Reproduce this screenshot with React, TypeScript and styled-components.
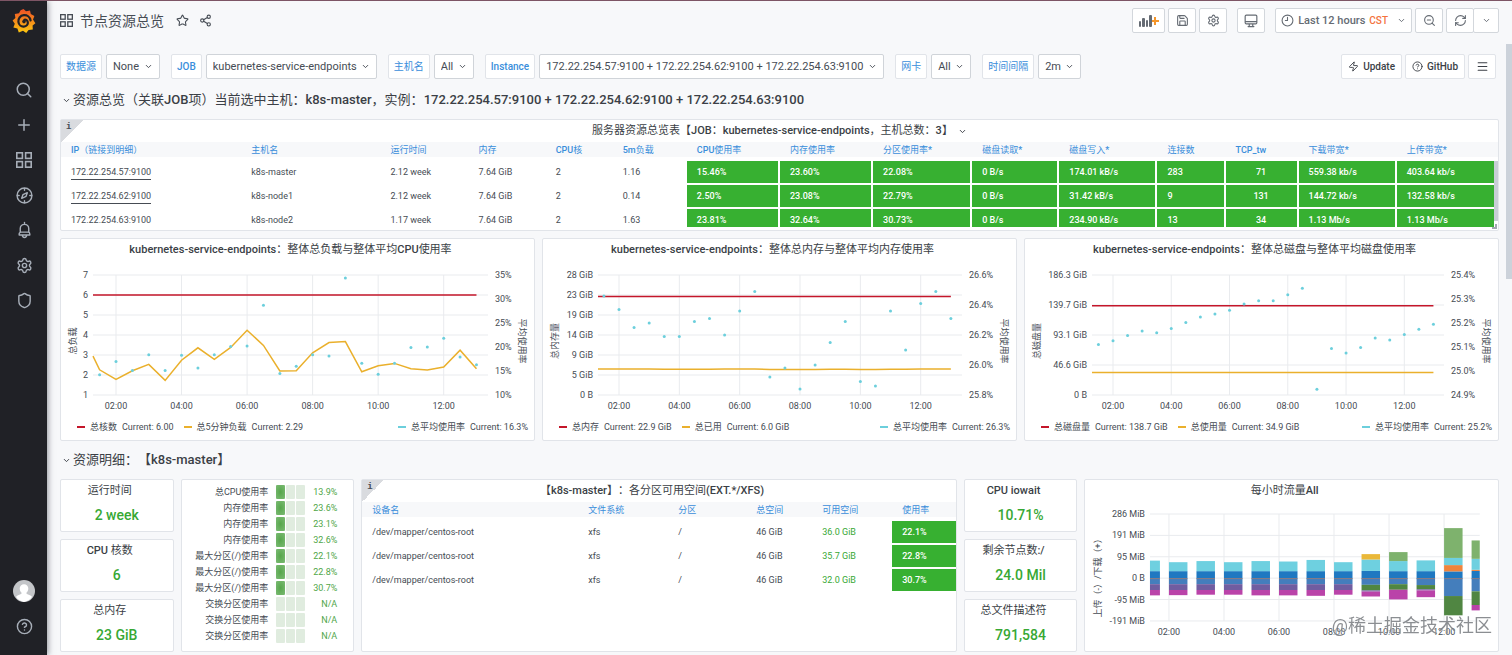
import React, { useId } from "react";
import styled, { createGlobalStyle, css } from "styled-components";
import {
  Search, Plus, Settings, Shield, Star, Share2, Save,
  ZoomOut, RefreshCw, ChevronDown, Zap, Menu, CircleHelp, Clock9,
} from "lucide-react";

const c = {
  text: "#464c54",
  heading: "#3b3f46",
  blue: "#3a8edb",
  page: "#f7f8fa",
  border: "#e1e4e9",
  green: "#37b031",
  statGreen: "#37a834",
  gauge: "#4fa648",
  rail: "#202126",
  railIcon: "#a7aeb8",
};

const Global = createGlobalStyle`
  * { box-sizing: border-box; }
  body {
    margin: 0;
    background: ${c.page};
    color: ${c.text};
    font: 9px/14px Roboto, "Noto Sans CJK SC", sans-serif;
    text-spacing-trim: space-all;
  }
  button, select { font: inherit; color: inherit; }
  h1, h2, h3, p { margin: 0; font-weight: 400; }
  b { font-weight: 500; }
`;

const Shell = styled.div`
  position: relative;
  display: flex;
  height: 100vh;
  overflow: hidden;
  border-top: 1px solid #7d5565;
`;
const PageScroll = styled.div`
  position: absolute;
  top: 43px;
  right: 0;
  width: 6px;
  height: 36%;
  background: #ccd2da;
`;

/* Side rail */
const Rail = styled.nav`
  flex: 0 0 47px;
  display: flex;
  flex-direction: column;
  align-items: center;
  padding: 7px 0 14px 1px;
  background: ${c.rail};
  box-shadow: 1px 0 6px rgba(60, 66, 76, 0.55);
  z-index: 1;
`;
const Logo = styled.a`
  display: flex;
  margin-bottom: 41px;
`;
const RailButton = styled.button`
  display: flex;
  align-items: center;
  justify-content: center;
  width: 30px;
  height: 30px;
  margin-bottom: 5px;
  padding: 0;
  border: 0;
  background: none;
  color: ${c.railIcon};
  &:last-child { margin-bottom: 0; }
`;
const RailSpacer = styled.div`
  flex: 1;
`;

/* Page frame */
const Page = styled.main`
  flex: 1;
  min-width: 0;
  padding: 7px 13px 0;
`;
const Bar = styled.header`
  display: flex;
  align-items: center;
  gap: 3px;
  height: 25px;
`;
const Crumb = styled.h1`
  display: flex;
  align-items: center;
  gap: 7px;
  margin-right: 5px;
  font-size: 14px;
  line-height: 20px;
`;
const IconButton = styled.button`
  display: flex;
  width: 20px;
  justify-content: center;
  padding: 0;
  border: 0;
  background: none;
`;
const Push = styled.div`
  flex: 1;
`;
const ToolButton = styled.button<{ $wide?: boolean; $apart?: boolean }>`
  display: flex;
  align-items: center;
  justify-content: center;
  gap: 4px;
  height: 25px;
  min-width: ${(p) => (p.$wide ? 33 : 28)}px;
  margin-left: ${(p) => (p.$apart ? 7 : 0)}px;
  padding: 0 5px;
  border: 1px solid #d3d7dc;
  border-radius: 2px;
  background: #fff;
  font-size: 11px;
  font-weight: 500;
  color: #656b73;
  white-space: nowrap;
`;
const Zone = styled.span`
  margin-right: 5px;
  font-size: 10px;
  color: #f4733d;
`;
const Joined = styled.div`
  display: flex;
  & > button + button { margin-left: -1px; min-width: 26px; }
`;

/* Variables */
const Filters = styled.div`
  display: flex;
  align-items: center;
  gap: 11px;
  height: 25px;
  margin: 21px 3px 0 0;
`;
const Field = styled.div`
  display: flex;
  gap: 4px;
`;
const FieldLabel = styled.label`
  height: 25px;
  padding: 0 5px;
  border: 1px solid ${c.border};
  border-radius: 2px;
  background: #fff;
  color: ${c.blue};
  font-size: 10px;
  line-height: 23px;
`;
const SelectBox = styled.div`
  display: grid;
  align-items: center;
  & > * { grid-area: 1 / 1; }
  & > svg { justify-self: end; margin-right: 7px; pointer-events: none; }
`;
const Select = styled.select`
  appearance: none;
  height: 25px;
  padding: 0 19px 0 6px;
  border: 1px solid #d0d4d9;
  border-radius: 2px;
  background: #fff;
  font-size: 11px;
`;
const LinkButton = styled(ToolButton)`
  padding: 0 6px;
  border-color: ${c.border};
  font-size: 10px;
  color: ${c.heading};
`;
const Links = styled.div`
  display: flex;
  gap: 3px;
`;

/* Dashboard rows and panels */
const RowTitle = styled.h2<{ $first?: boolean }>`
  display: flex;
  align-items: center;
  gap: 2px;
  height: ${(p) => (p.$first ? 40 : 38)}px;
  padding-top: ${(p) => (p.$first ? 2 : 0)}px;
  padding-left: 2px;
  font-size: 13px;
  line-height: 18px;
  color: ${c.heading};
  white-space: pre;
`;
const Grid = styled.div`
  display: grid;
  grid-template-columns: repeat(24, minmax(0, 1fr));
  gap: 7px;
`;
const Stack = styled.div<{ $span: number }>`
  grid-column: span ${(p) => p.$span};
  display: grid;
  gap: 7px;
`;
const PanelBox = styled.section<{ $span?: number }>`
  grid-column: span ${(p) => p.$span ?? 1};
  position: relative;
  min-width: 0;
  border: 1px solid ${c.border};
  border-radius: 2px;
  background: #fff;
`;
const PanelTitle = styled.h3<{ $menu?: boolean }>`
  display: flex;
  align-items: center;
  justify-content: center;
  gap: 5px;
  height: 21px;
  padding: 1px ${(p) => (p.$menu ? 0 : 14)}px 0 0;
  font-size: 11px;
  line-height: 16px;
  color: ${c.heading};
  white-space: pre;
`;
const Corner = styled.span`
  position: absolute;
  top: 0;
  left: 0;
  width: 22px;
  height: 22px;
  padding-left: 5px;
  background: linear-gradient(135deg, #d9dbdf 50%, transparent 50%);
  font: bold 9px/14px "Liberation Mono", monospace;
`;

/* Tables */
const TableWrap = styled.div<{ $clip?: boolean }>`
  position: relative;
  margin-top: 1px;
  ${(p) =>
    p.$clip &&
    css`
      height: 85px;
      margin-bottom: 3px;
      padding-right: 4px;
      overflow: hidden;
      background: linear-gradient(${c.page} 15px, transparent 15px);
      &::after {
        content: "";
        position: absolute;
        top: 19px;
        right: 0;
        width: 4px;
        height: 60px;
        background: #c8ced6;
      }
    `}
`;
const Resize = styled.span`
  position: absolute;
  right: 1px;
  bottom: 1px;
  width: 5px;
  height: 5px;
  border: solid #a2a8b0;
  border-width: 0 2px 2px 0;
`;
const Table = styled.table`
  width: 100%;
  table-layout: fixed;
  border-collapse: separate;
  border-spacing: 0;
`;
const Col = styled.col<{ $w: number }>`
  width: ${(p) => p.$w}px;
`;
const Th = styled.th`
  height: 19px;
  padding: 2px 0 0 10px;
  border-bottom: 4px solid #fff;
  background: ${c.page};
  color: ${c.blue};
  font-weight: 400;
  line-height: 13px;
  text-align: left;
  white-space: nowrap;
`;
const Td = styled.td<{ $fill?: boolean; $center?: boolean; $green?: boolean }>`
  height: 24px;
  padding: 0 0 0 ${(p) => (p.$center ? 0 : 10)}px;
  border: solid #fff;
  border-width: 0 2px 2px 0;
  white-space: nowrap;
  text-align: ${(p) => (p.$center ? "center" : "left")};
  color: ${(p) => (p.$fill ? "#fff" : p.$green ? c.statGreen : c.text)};
  font-weight: ${(p) => (p.$fill ? 500 : 400)};
  background: ${(p) => (p.$fill ? c.green : "#fff")};
  &:last-child { border-right-width: 0; }
`;
const HostLink = styled.a`
  color: inherit;
  text-decoration: none;
  border-bottom: 1px solid ${c.text};
  padding-bottom: 2px;
`;

/* Stats, gauges, charts */
const StatValue = styled.p`
  height: 30px;
  padding: 4px 0 6px;
  font-size: 14px;
  font-weight: 500;
  line-height: 20px;
  text-align: center;
  color: ${c.statGreen};
`;
const Gauges = styled.div`
  display: grid;
  grid-template-columns: 1fr auto 24px;
  grid-auto-rows: 14px;
  gap: 2px 8px;
  padding: 5px 16px 5px 4px;
  text-align: right;
  white-space: nowrap;
`;
const Cells = styled.span`
  display: grid;
  grid-template-columns: repeat(3, 9px);
  gap: 1px;
`;
const Cell = styled.i<{ $on: boolean }>`
  border-radius: 1px;
  background: ${(p) => (p.$on ? "radial-gradient(#56a64b, #7cbb74)" : "#e0ecdf")};
`;
const GaugeValue = styled.span`
  color: ${c.gauge};
`;
const Plot = styled.svg`
  display: block;
  width: 100%;
  height: auto;
  fill: ${c.text};
  font-size: 9px;
`;
const Legend = styled.div`
  display: flex;
  align-items: flex-start;
  gap: 10px;
  height: 25px;
  padding: 5px 6px 0 16px;
  white-space: nowrap;
  & > :last-child { margin-left: auto; }
`;
const Key = styled.span<{ $color: string }>`
  display: flex;
  align-items: center;
  gap: 5px;
  &::before {
    content: "";
    width: 8px;
    height: 2px;
    background: ${(p) => p.$color};
  }
`;
const Watermark = styled.div`
  position: fixed;
  right: 20px;
  bottom: 16px;
  font-size: 18px;
  line-height: 26px;
  color: rgba(90, 94, 100, 0.7);
  text-shadow: 0 0 2px #fff;
`;

/* Icons */
const AppsIcon = ({ size }: { size: number }) => (
  <svg width={size} height={size} viewBox="0 0 20 20" fill="none" stroke="currentColor" strokeWidth="2">
    <rect x="1" y="1" width="7" height="7" /><rect x="12" y="1" width="7" height="7" />
    <rect x="1" y="12" width="7" height="7" /><rect x="12" y="12" width="7" height="7" />
  </svg>
);
const CompassIcon = () => (
  <svg width="17" height="17" viewBox="0 0 24 24" fill="none" stroke="currentColor" strokeWidth="2" strokeLinecap="round" strokeLinejoin="round">
    <circle cx="12" cy="12" r="10.500" />
    <path d="M12 2v2.500M12 19.500V22M2 12h2.500M19.500 12H22M16 8l-1.800 5.200L8 16l1.800-5.200z" />
  </svg>
);
const BellIcon = () => (
  <svg width="17" height="18" viewBox="0 0 24 24" fill="none" stroke="currentColor" strokeWidth="2" strokeLinecap="round" strokeLinejoin="round">
    <path d="M12 1.500V4M6 15v-5a6 6 0 0 1 12 0v5M4.500 19v-1.500A2.500 2.500 0 0 1 7 15h10a2.500 2.500 0 0 1 2.500 2.500V19zM9 19.500a3 3 0 0 0 6 0" />
  </svg>
);
const ScreenIcon = () => (
  <svg width="14" height="14" viewBox="0 0 24 24" fill="none" stroke="currentColor" strokeWidth="2" strokeLinecap="round" strokeLinejoin="round">
    <path d="M4 2h16a2 2 0 0 1 2 2v11a2 2 0 0 1-2 2H4a2 2 0 0 1-2-2V4a2 2 0 0 1 2-2zM2 13h20M9 17v4M15 17v4M7 21.500h10" />
  </svg>
);
const AddPanelIcon = () => (
  <svg width="20" height="14" viewBox="0 0 20 14" fill="#656b73">
    <rect x="0" y="7" width="2" height="6" rx="1" /><rect x="3" y="4" width="3" height="9" rx="1" />
    <rect x="7" y="6" width="2" height="7" rx="1" /><rect x="10" y="1" width="3" height="12" rx="1" />
    <path d="M15 3h2v3h3v2h-3v3h-2V8h-2V6h2z" fill="#f5962a" />
  </svg>
);
const GrafanaIcon = () => {
  const id = useId();
  return (
    <svg width="24" height="26" viewBox="0 0 24 26">
      <defs>
        <linearGradient id={id} x1="0" y1="0" x2="0" y2="1">
          <stop offset="0" stopColor="#ee4f27" /><stop offset="1" stopColor="#fcc80f" />
        </linearGradient>
      </defs>
      <path fill={`url(#${id})`} d="M11.5 1 14 3.3 18 2.4 18.8 6 22.4 8 21 11.6 23.4 15.2 20.6 17.6 20.8 21.6 16.6 22 14.2 25 11 22.8 6.8 24.6 5.4 20.6 1.4 19.6 2.8 15.8.6 12.6 3.4 10 2.8 6 7 5.2 8.6 2.2z" />
      <path fill="none" stroke={c.rail} strokeWidth="2.2" strokeLinecap="round" d="M18.6 12.4c-.8-3.6-3.6-5.6-6.8-5.2-3.6.4-5.8 3.4-5.4 6.6.4 3 2.8 5 5.4 4.8 2.8-.2 4.4-2.2 4-4.4-.3-1.8-1.8-2.9-3.4-2.5" />
      <circle cx="12" cy="13.6" r="1.8" fill={c.rail} />
    </svg>
  );
};
const Avatar = () => (
  <svg width="22" height="22" viewBox="0 0 22 22">
    <circle cx="11" cy="11" r="11" fill="#c3c5c8" />
    <path fill="#fff" d="M11 4.2a4.3 4.3 0 0 1 4.3 4.4c0 2-.9 3.300-1.900 4.200 0 1 .5 1.400 2.300 1.900 1.800.5 2.800 1.200 3.200 2.400A11 11 0 0 1 11 22a11 11 0 0 1-7.900-4.900c.4-1.200 1.400-1.900 3.200-2.400 1.800-.5 2.300-.9 2.300-1.900-1-.9-1.900-2.200-1.900-4.200A4.300 4.300 0 0 1 11 4.200z" />
  </svg>
);
const Caret = () => <ChevronDown size={9} strokeWidth={2.5} />;

/* Latin runs are set in medium weight, Chinese runs stay regular. */
const Mixed = ({ children }: { children: string }) => (
  <span>
    {children.split(/([\x21-\x7e](?:[\x20-\x7e]*[\x21-\x7e])?)/).map((part, i) => (i % 2 ? <b key={i}>{part}</b> : part))}
  </span>
);

/* Data */
const fields = [
  ["数据源", "None"],
  ["JOB", "kubernetes-service-endpoints"],
  ["主机名", "All"],
  ["Instance", "172.22.254.57:9100 + 172.22.254.62:9100 + 172.22.254.63:9100"],
  ["网卡", "All"],
  ["时间间隔", "2m"],
];

const hostCols: [string, number][] = [
  ["IP（链接到明细）", 180], ["主机名", 139], ["运行时间", 88], ["内存", 77], ["CPU核", 67],
  ["5m负载", 74], ["CPU使用率", 93], ["内存使用率", 93], ["分区使用率*", 99], ["磁盘读取*", 87],
  ["磁盘写入*", 98], ["连接数", 68], ["TCP_tw", 73], ["下载带宽*", 98], ["上传带宽*", 97],
];
const hosts = [
  ["172.22.254.57:9100", "k8s-master", "2.12 week", "7.64 GiB", "2", "1.16", "15.46%", "23.60%", "22.08%", "0 B/s", "174.01 kB/s", "283", "71", "559.38 kb/s", "403.64 kb/s"],
  ["172.22.254.62:9100", "k8s-node1", "2.12 week", "7.64 GiB", "2", "0.14", "2.50%", "23.08%", "22.79%", "0 B/s", "31.42 kB/s", "9", "131", "144.72 kb/s", "132.58 kb/s"],
  ["172.22.254.63:9100", "k8s-node2", "1.17 week", "7.64 GiB", "2", "1.63", "23.81%", "32.64%", "30.73%", "0 B/s", "234.90 kB/s", "13", "34", "1.13 Mb/s", "1.13 Mb/s"],
];

const diskCols: [string, number][] = [
  ["设备名", 216], ["文件系统", 90], ["分区", 78], ["总空间", 66], ["可用空间", 80], ["使用率", 64],
];
const disks = [
  ["/dev/mapper/centos-root", "xfs", "/", "46 GiB", "36.0 GiB", "22.1%"],
  ["/dev/mapper/centos-root", "xfs", "/", "46 GiB", "35.7 GiB", "22.8%"],
  ["/dev/mapper/centos-root", "xfs", "/", "46 GiB", "32.0 GiB", "30.7%"],
];

const gauges: [string, string][] = [
  ["总CPU使用率", "13.9%"], ["内存使用率", "23.6%"], ["内存使用率", "23.1%"], ["内存使用率", "32.6%"],
  ["最大分区(/)使用率", "22.1%"], ["最大分区(/)使用率", "22.8%"], ["最大分区(/)使用率", "30.7%"],
  ["交换分区使用率", "N/A"], ["交换分区使用率", "N/A"], ["交换分区使用率", "N/A"],
];

type Trend = {
  title: string;
  leftTitle: string;
  left: string[];
  right: string[];
  range: [number, number];
  dotRange: [number, number];
  geo: { from: number; two: number; hour: number; label: number };
  total: number;
  used: number[];
  dots: number[];
  legend: [string, string, string][];
};
const RED = "#c4162a";
const YELLOW = "#eab02c";
const CYAN = "#6ccfdc";

const trends: Trend[] = [
  {
    title: "整体总负载与整体平均CPU使用率",
    leftTitle: "总负载",
    left: ["7", "6", "5", "4", "3", "2", "1"],
    right: ["35%", "30%", "25%", "20%", "15%", "10%"],
    range: [1, 7],
    dotRange: [10, 35],
    geo: { from: 32, two: 55, hour: 32.77, label: 434 },
    total: 6,
    used: [2.94, 2.26, 1.78, 2.21, 2.53, 1.73, 2.74, 3.36, 2.78, 3.38, 4.24, 3.48, 2.2, 2.21, 3.11, 3.62, 3.67, 2.16, 2.46, 2.58, 2.31, 2.25, 2.4, 3.24, 2.31],
    dots: [14.2, 17, 15.1, 18.4, 15.1, 18.3, 15.6, 18.4, 20.1, 20.2, 28.7, 14.5, 16, 18.4, 18.1, 34.4, 16.6, 14.3, 16.6, 19.9, 20, 21.8, 17.9, 16.3],
    legend: [["总核数", "6.00", RED], ["总5分钟负载", "2.29", YELLOW], ["总平均使用率", "16.3%", CYAN]],
  },
  {
    title: "整体总内存与整体平均内存使用率",
    leftTitle: "总内存量",
    left: ["28 GiB", "23 GiB", "19 GiB", "14 GiB", "9 GiB", "5 GiB", "0 B"],
    right: ["26.6%", "26.4%", "26.2%", "26.0%", "25.8%"],
    range: [0, 27.9],
    dotRange: [25.8, 26.6],
    geo: { from: 55, two: 76, hour: 30.17, label: 426 },
    total: 22.9,
    used: [6.05, 6.05, 6.05, 6.05, 6.05, 6, 6, 6, 6, 6.05, 6.05, 6.05, 5.95, 5.95, 5.9, 5.95, 6, 6, 5.95, 5.95, 6, 6, 6.05, 6.05, 6.05],
    dots: [26.46, 26.37, 26.25, 26.28, 26.19, 26.19, 26.29, 26.31, 26.2, 26.36, 26.49, 25.92, 25.98, 25.84, 26, 26.15, 26.29, 25.89, 25.86, 26.36, 26.1, 26.41, 26.49, 26.31],
    legend: [["总内存", "22.9 GiB", RED], ["总已用", "6.0 GiB", YELLOW], ["总平均使用率", "26.3%", CYAN]],
  },
  {
    title: "整体总磁盘与整体平均磁盘使用率",
    leftTitle: "总磁盘量",
    left: ["186.3 GiB", "139.7 GiB", "93.1 GiB", "46.6 GiB", "0 B"],
    right: ["25.4%", "25.3%", "25.2%", "25.1%", "25.0%", "24.9%"],
    range: [0, 186.3],
    dotRange: [24.9, 25.4],
    geo: { from: 67, two: 88, hour: 29.13, label: 426 },
    total: 138.7,
    used: Array(25).fill(34.9),
    dots: [25.11, 25.126, 25.148, 25.167, 25.159, 25.177, 25.202, 25.225, 25.237, 25.253, 25.279, 25.293, 25.293, 25.318, 25.345, 24.924, 25.094, 25.075, 25.098, 25.138, 25.129, 25.152, 25.174, 25.195],
    legend: [["总磁盘量", "138.7 GiB", RED], ["总使用量", "34.9 GiB", YELLOW], ["总平均使用率", "25.2%", CYAN]],
  },
];

const HOURS = [2, 4, 6, 8, 10, 12];
const clock = (h: number) => `${String(h).padStart(2, "0")}:00`;

function TrendPanel({ t }: { t: Trend }) {
  const top = 15;
  const bottom = 135;
  const { from, two, hour, label } = t.geo;
  const x = (h: number) => two + (h - 2) * hour;
  const y = (v: number, [lo, hi]: [number, number]) => bottom - ((v - lo) / (hi - lo)) * (bottom - top);
  const end = x(13);
  const gridEnd = label - 7;
  const tick = (i: number, n: number) => top + (i * (bottom - top)) / (n - 1);
  const line = t.used.map((v, i) => `${i ? x(1 + i / 2) : from},${y(v, t.range)}`).join(" ");
  return (
    <PanelBox $span={8}>
      <PanelTitle><Mixed>{`kubernetes-service-endpoints：${t.title}`}</Mixed></PanelTitle>
      <Plot viewBox="0 0 473 155" role="img" aria-label={t.title}>
        <g stroke="#e9ebee">
          {t.left.map((l, i) => <line key={l} x1={from} x2={gridEnd} y1={tick(i, t.left.length)} y2={tick(i, t.left.length)} />)}
          {HOURS.map((h) => <line key={h} x1={x(h)} x2={x(h)} y1={top} y2={bottom} />)}
        </g>
        <g textAnchor="end">
          {t.left.map((l, i) => <text key={l} x={from - 5} y={tick(i, t.left.length) + 3}>{l}</text>)}
        </g>
        {t.right.map((l, i) => <text key={l} x={label} y={tick(i, t.right.length) + 3}>{l}</text>)}
        <g textAnchor="middle">
          {HOURS.map((h) => <text key={h} x={x(h)} y="149">{clock(h)}</text>)}
          <text transform="translate(15 81) rotate(-90)">{t.leftTitle}</text>
          <text transform="translate(458 81) rotate(90)">平均使用率</text>
        </g>
        <line x1={from} x2={end} y1={y(t.total, t.range)} y2={y(t.total, t.range)} stroke={RED} strokeWidth="1.5" />
        <polyline points={line} fill="none" stroke={YELLOW} strokeWidth="1.5" />
        {t.dots.map((v, i) => <circle key={i} cx={x(1.5 + i / 2)} cy={y(v, t.dotRange)} r="1.5" fill={CYAN} />)}
      </Plot>
      <Legend>
        {t.legend.map(([name, value, color]) => (
          <Key key={name} $color={color}>{name} <span>Current: {value}</span></Key>
        ))}
      </Legend>
    </PanelBox>
  );
}

const s = {
  blue: "#1f78c1", cyan: "#6ed0e0", steel: "#447ebc", purple: "#705da0", magenta: "#ba43a9",
  forest: "#508642", green: "#7eb26d", yellow: "#eab839", orange: "#ef843c",
};
type Seg = [string, number];
const usual = (up: number, down: number): [Seg[], Seg[]] => [
  [[s.blue, 31], [s.cyan, up]],
  [[s.steel, 27], [s.purple, 53], [s.magenta, down]],
];
const traffic: [Seg[], Seg[]][] = [
  usual(78, 77), usual(71, 76), usual(76, 74), usual(71, 74), usual(76, 77), usual(74, 77), usual(81, 79), usual(71, 74),
  [[[s.blue, 32], [s.cyan, 83], [s.yellow, 107]], [[s.steel, 30], [s.forest, 55], [s.purple, 60], [s.magenta, 82]]],
  [[[s.blue, 31], [s.cyan, 76], [s.green, 116]], [[s.steel, 27], [s.forest, 52], [s.magenta, 95]]],
  [[[s.blue, 31], [s.cyan, 79]], [[s.steel, 31], [s.forest, 50], [s.purple, 55], [s.magenta, 85]]],
  [[[s.blue, 30], [s.orange, 58], [s.cyan, 90], [s.green, 223]], [[s.steel, 80], [s.forest, 166]]],
  [[[s.blue, 32], [s.orange, 37], [s.cyan, 86], [s.green, 168]], [[s.steel, 59], [s.forest, 120], [s.magenta, 144]]],
];

function TrafficPanel() {
  const labels = ["286 MiB", "191 MiB", "95 MiB", "0 B", "-95 MiB", "-191 MiB"];
  const from = 65;
  const to = 395;
  const x = (h: number) => 84 + (h - 2) * 27.53;
  const y = (v: number) => 14 + ((286 - v) / 477) * 107;
  const tick = (i: number) => 14 + (i * 107) / 5;
  return (
    <PanelBox $span={7}>
      <PanelTitle><Mixed>每小时流量All</Mixed></PanelTitle>
      <Plot viewBox="0 1 413 150" role="img" aria-label="每小时流量All">
        <g stroke="#e9ebee">
          {labels.map((l, i) => <line key={l} x1={from} x2={to} y1={tick(i)} y2={tick(i)} />)}
          {HOURS.map((h) => <line key={h} x1={x(h)} x2={x(h)} y1="14" y2="121" />)}
        </g>
        <g textAnchor="end">
          {labels.map((l, i) => <text key={l} x="60" y={tick(i) + 3}>{l}</text>)}
        </g>
        <g textAnchor="middle">
          {HOURS.map((h) => <text key={h} x={x(h)} y="135">{clock(h)}</text>)}
          <text transform="translate(16 76) rotate(-90)">上传（-）/下载（+）</text>
        </g>
        {traffic.map((sides, i) => {
          const a = Math.max(from, x(i + 1));
          const b = Math.min(to, x(i + 1) + 18.5);
          return sides.map((segs, side) =>
            segs.map(([color, v], k) => {
              const sign = side ? -1 : 1;
              const y1 = y(sign * (k ? segs[k - 1][1] : 0));
              const y2 = y(sign * v);
              return <rect key={`${i}-${side}-${k}`} x={a} width={b - a} y={Math.min(y1, y2)} height={Math.abs(y2 - y1)} fill={color} />;
            }),
          ).concat([[<rect key={`${i}-z`} x={a} width={b - a} y={y(0)} height="1" fill="#8a7a80" />]]);
        })}
      </Plot>
    </PanelBox>
  );
}

const Stat = ({ title, value }: { title: string; value: string }) => (
  <PanelBox>
    <PanelTitle><Mixed>{title}</Mixed></PanelTitle>
    <StatValue>{value}</StatValue>
  </PanelBox>
);

function DataTable({ cols, rows, fillFrom, centerCol, greenCol, linked }: {
  cols: [string, number][]; rows: string[][]; fillFrom: number; centerCol?: number; greenCol?: number; linked?: boolean;
}) {
  return (
    <Table>
      <colgroup>{cols.map(([n, w]) => <Col key={n} $w={w} />)}</colgroup>
      <thead><tr>{cols.map(([n]) => <Th key={n} scope="col"><Mixed>{n}</Mixed></Th>)}</tr></thead>
      <tbody>
        {rows.map((r, i) => (
          <tr key={i}>
            {r.map((v, k) => (
              <Td key={k} $fill={k >= fillFrom} $center={k === centerCol} $green={k === greenCol}>
                {linked && k === 0 ? <HostLink href="#">{v}</HostLink> : v}
              </Td>
            ))}
          </tr>
        ))}
      </tbody>
    </Table>
  );
}

export default function App() {
  return (
    <>
      <Global />
      <Shell>
        <Rail aria-label="Main">
          <Logo href="#" aria-label="Grafana"><GrafanaIcon /></Logo>
          <RailButton aria-label="Search"><Search size={18} /></RailButton>
          <RailButton aria-label="Create"><Plus size={18} /></RailButton>
          <RailButton aria-label="Dashboards"><AppsIcon size={16} /></RailButton>
          <RailButton aria-label="Explore"><CompassIcon /></RailButton>
          <RailButton aria-label="Alerting"><BellIcon /></RailButton>
          <RailButton aria-label="Configuration"><Settings size={17} /></RailButton>
          <RailButton aria-label="Server admin"><Shield size={17} /></RailButton>
          <RailSpacer />
          <RailButton aria-label="Profile"><Avatar /></RailButton>
          <RailButton aria-label="Help"><CircleHelp size={17} /></RailButton>
        </Rail>
        <Page>
          <Bar>
            <Crumb><AppsIcon size={13} />节点资源总览</Crumb>
            <IconButton aria-label="Mark as favorite"><Star size={13} /></IconButton>
            <IconButton aria-label="Share"><Share2 size={13} /></IconButton>
            <Push />
            <ToolButton $wide aria-label="Add panel"><AddPanelIcon /></ToolButton>
            <ToolButton aria-label="Save"><Save size={13} /></ToolButton>
            <ToolButton aria-label="Settings"><Settings size={13} /></ToolButton>
            <ToolButton $apart aria-label="Cycle view mode"><ScreenIcon /></ToolButton>
            <ToolButton $apart><Clock9 size={13} />Last 12 hours <Zone>CST</Zone><Caret /></ToolButton>
            <ToolButton aria-label="Zoom out"><ZoomOut size={13} /></ToolButton>
            <Joined>
              <ToolButton aria-label="Refresh"><RefreshCw size={13} /></ToolButton>
              <ToolButton aria-label="Refresh interval"><Caret /></ToolButton>
            </Joined>
          </Bar>
          <Filters>
            {fields.map(([name, value]) => (
              <Field key={name}>
                <FieldLabel htmlFor={`var-${name}`}><Mixed>{name}</Mixed></FieldLabel>
                <SelectBox>
                  <Select id={`var-${name}`}><option>{value}</option></Select>
                  <Caret />
                </SelectBox>
              </Field>
            ))}
            <Push />
            <Links>
              <LinkButton><Zap size={11} />Update</LinkButton>
              <LinkButton><CircleHelp size={11} />GitHub</LinkButton>
              <LinkButton aria-label="Menu"><Menu size={13} /></LinkButton>
            </Links>
          </Filters>
          <RowTitle $first>
            <Caret />
            <Mixed>资源总览（关联JOB项）当前选中主机：k8s-master，实例：172.22.254.57:9100 + 172.22.254.62:9100 + 172.22.254.63:9100</Mixed>
          </RowTitle>
          <Grid>
            <PanelBox $span={24}>
              <Corner>i</Corner>
              <PanelTitle $menu>
                <Mixed>服务器资源总览表【JOB：kubernetes-service-endpoints，主机总数：3】</Mixed>
                <Caret />
              </PanelTitle>
              <TableWrap $clip>
                <DataTable cols={hostCols} rows={hosts} fillFrom={6} centerCol={12} linked />
              </TableWrap>
              <Resize />
            </PanelBox>
            {trends.map((t) => <TrendPanel key={t.title} t={t} />)}
          </Grid>
          <RowTitle><Caret /><Mixed>资源明细：【k8s-master】</Mixed></RowTitle>
          <Grid>
            <Stack $span={2}>
              <Stat title="运行时间" value="2 week" />
              <Stat title="CPU 核数" value="6" />
              <Stat title="总内存" value="23 GiB" />
            </Stack>
            <PanelBox $span={3}>
              <Gauges>
                {gauges.map(([name, value], i) => (
                  <React.Fragment key={i}>
                    <span>{name}</span>
                    <Cells><Cell $on={value !== "N/A"} /><Cell $on={false} /><Cell $on={false} /></Cells>
                    <GaugeValue>{value}</GaugeValue>
                  </React.Fragment>
                ))}
              </Gauges>
            </PanelBox>
            <PanelBox $span={10}>
              <Corner>i</Corner>
              <PanelTitle><Mixed>【k8s-master】：各分区可用空间(EXT.*/XFS)</Mixed></PanelTitle>
              <TableWrap>
                <DataTable cols={diskCols} rows={disks} fillFrom={5} greenCol={4} />
              </TableWrap>
            </PanelBox>
            <Stack $span={2}>
              <Stat title="CPU iowait" value="10.71%" />
              <Stat title="剩余节点数:/" value="24.0 Mil" />
              <Stat title="总文件描述符" value="791,584" />
            </Stack>
            <TrafficPanel />
          </Grid>
        </Page>
        <PageScroll />
      </Shell>
      <Watermark>@稀土掘金技术社区</Watermark>
    </>
  );
}
